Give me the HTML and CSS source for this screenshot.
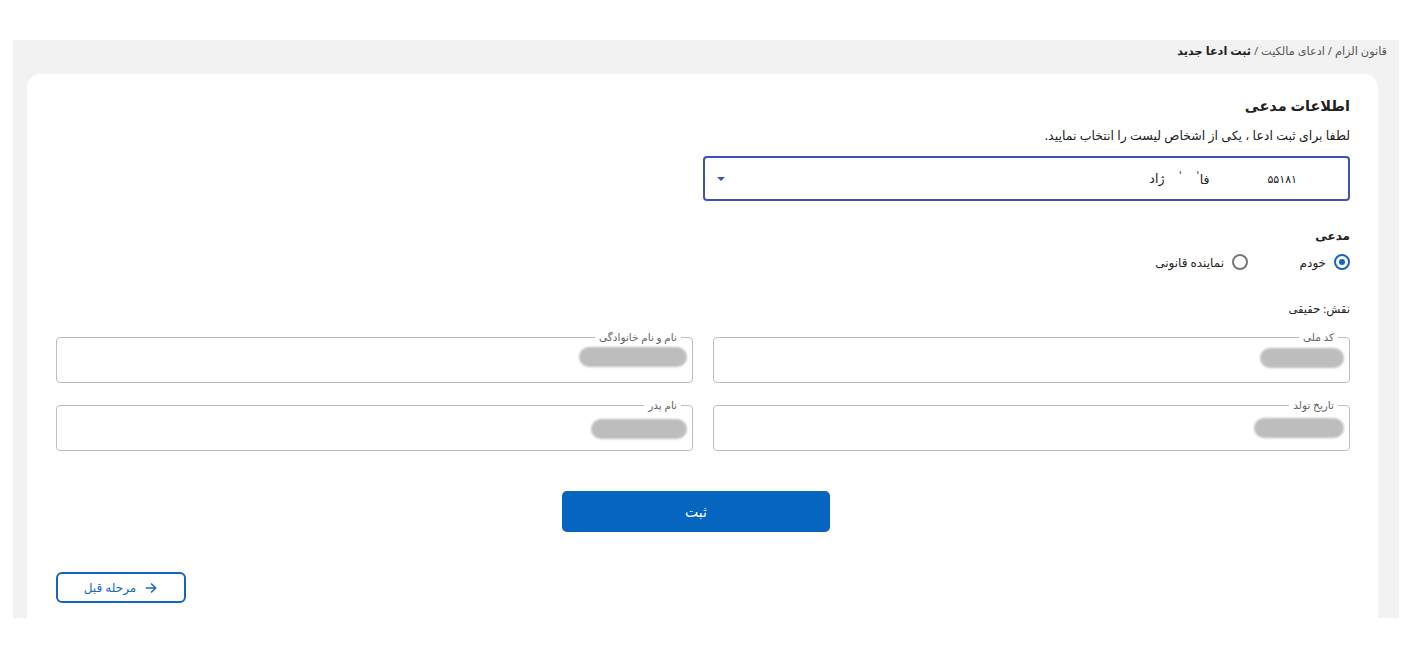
FILE: index.html
```html
<!DOCTYPE html>
<html lang="fa" dir="rtl">
<head>
    <meta charset="UTF-8">
    <meta name="viewport" content="width=device-width, initial-scale=1.0">
    <title>ثبت ادعا جدید</title>
    <link rel="stylesheet" href="styles.css">
</head>
<body>
    <div class="wrapper">
        <div class="breadcrumb">
            <span>قانون الزام</span> / <span>ادعای مالکیت</span> / <b>ثبت ادعا جدید</b>
        </div>

        <div class="card">
            <h1 class="title">اطلاعات مدعی</h1>
            <p class="hint">لطفا برای ثبت ادعا ، یکی از اشخاص لیست را انتخاب نمایید.</p>

            <div class="select">
                <div class="select-value">
                    <span class="part-num">۵۵۱۸۱</span>
                    <span class="part-a">فا<sup>ˈ</sup></span>
                    <span class="part-b">ˈ</span>
                    <span class="part-c">ژاد</span>
                </div>
                <span class="caret"></span>
            </div>

            <div class="group-label">مدعی</div>
            <div class="radios">
                <label class="radio checked"><span class="dot"></span>خودم</label>
                <label class="radio"><span class="dot"></span>نماینده قانونی</label>
            </div>

            <div class="role">نقش: حقیقی</div>

            <div class="fields">
                <fieldset class="field">
                    <legend>کد ملی</legend>
                    <span class="blur w1"></span>
                </fieldset>
                <fieldset class="field">
                    <legend>نام و نام خانوادگی</legend>
                    <span class="blur w2"></span>
                </fieldset>
                <fieldset class="field">
                    <legend>تاریخ تولد</legend>
                    <span class="blur w3"></span>
                </fieldset>
                <fieldset class="field">
                    <legend>نام پدر</legend>
                    <span class="blur w4"></span>
                </fieldset>
            </div>

            <div class="actions">
                <button class="btn-primary">ثبت</button>
            </div>

            <div class="footer">
                <button class="btn-back">
                    <svg width="14" height="14" viewBox="0 0 24 24" fill="none" stroke="currentColor" stroke-width="2.6" stroke-linecap="round" stroke-linejoin="round">
                        <path d="M4 12h16M13 5l7 7-7 7"/>
                    </svg>
                    مرحله قبل
                </button>
            </div>
        </div>
    </div>
</body>
</html>
```

FILE: styles.css
```css
* {
    margin: 0;
    padding: 0;
    box-sizing: border-box;
}

body {
    font-family: 'Noto Sans', 'DejaVu Sans', sans-serif;
    background: #fff;
    color: #222;
    padding-top: 40px;
}

.wrapper {
    background: #f2f2f2;
    margin: 0 8px 0 13px;
    height: 578px;
    overflow: hidden;
    padding: 0 12px 0 21px;
}

.breadcrumb {
    font-size: 11.3px;
    color: #555;
    height: 34px;
    padding-top: 3px;
}

.breadcrumb b {
    color: #222;
}

.card {
    background: #fff;
    border-radius: 14px;
    margin-left: -7px;
    margin-right: 9px;
    padding: 21px 28px 40px 29px;
    min-height: 600px;
}

.title {
    font-size: 14.5px;
    font-weight: 700;
    color: #222;
    margin-bottom: 12px;
}

.hint {
    font-size: 12.5px;
    color: #222;
    margin-bottom: 12px;
}

.select {
    width: 647px;
    height: 45px;
    border: 2px solid #3f51b5;
    border-radius: 4px;
    display: flex;
    align-items: center;
    justify-content: space-between;
    padding: 0 51px 0 12px;
    font-size: 12.5px;
}

.select-value {
    display: flex;
    align-items: center;
}

.part-num {
    font-size: 11px;
}

.part-a {
    margin-right: 58px;
}

.part-a sup {
    font-size: 10px;
    margin-right: 1px;
}

.part-b {
    margin-right: 16px;
    font-size: 10px;
    align-self: flex-start;
}

.part-c {
    margin-right: 15px;
}

.caret {
    width: 0;
    height: 0;
    border-left: 4px solid transparent;
    border-right: 4px solid transparent;
    border-top: 4px solid #3f51b5;
}

.group-label {
    font-size: 12px;
    font-weight: 700;
    margin-top: 26px;
}

.radios {
    display: flex;
    gap: 24px;
    margin-top: 6px;
}

.radio {
    display: flex;
    align-items: center;
    gap: 8px;
    font-size: 12px;
    color: #222;
    height: 24px;
}

.radio:first-child {
    width: 78px;
}

.dot {
    width: 16px;
    height: 16px;
    border-radius: 50%;
    border: 2px solid #777;
    display: inline-block;
    position: relative;
}

.radio.checked .dot {
    border-color: #1565c0;
}

.radio.checked .dot::after {
    content: '';
    position: absolute;
    top: 3px;
    right: 3px;
    width: 6px;
    height: 6px;
    border-radius: 50%;
    background: #1565c0;
}

.role {
    font-size: 11.5px;
    margin-top: 27px;
}

.fields {
    display: grid;
    grid-template-columns: 1fr 1fr;
    column-gap: 20px;
    row-gap: 16px;
    margin-top: 15px;
}

.field {
    height: 52px;
    border: 1px solid #bdbdbd;
    border-radius: 4px;
    padding: 0 5px 0 0;
    display: flex;
    align-items: flex-start;
}

.field legend {
    font-size: 10.5px;
    color: #666;
    padding: 0 4px;
    margin-right: 6px;
    line-height: 12px;
}

.blur {
    display: block;
    height: 20px;
    background: #bdbdbd;
    border-radius: 10px;
    filter: blur(1px);
    margin-top: 5px;
}

.w1 { width: 84px; }
.w2 { width: 108px; margin-top: 4px; }
.w3 { width: 90px; margin-top: 7px; }
.w4 { width: 96px; margin-top: 8px; }

.actions {
    display: flex;
    justify-content: center;
    margin-top: 40px;
    padding-right: 14px;
}

.btn-primary {
    width: 268px;
    height: 41px;
    background: #0665be;
    color: #fff;
    border: none;
    border-radius: 5px;
    font-family: inherit;
    font-size: 14px;
    cursor: pointer;
}

.footer {
    display: flex;
    justify-content: flex-end;
    margin-top: 40px;
}

.btn-back {
    width: 130px;
    height: 31px;
    background: #fff;
    color: #1565c0;
    border: 2px solid #1565c0;
    border-radius: 6px;
    font-family: inherit;
    font-size: 12px;
    display: flex;
    align-items: center;
    justify-content: center;
    gap: 8px;
    cursor: pointer;
}
```
